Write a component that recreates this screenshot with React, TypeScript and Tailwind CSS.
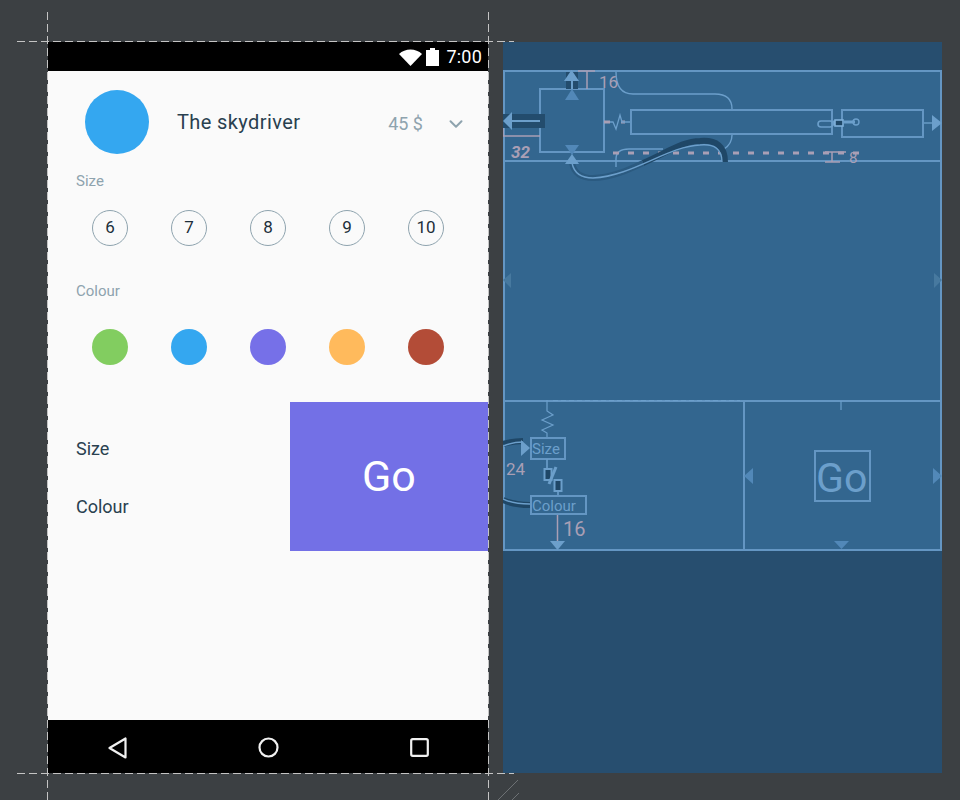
import { ChevronDown } from "lucide-react";

const sizes = ["6", "7", "8", "9", "10"];
const colours = ["bg-[#82cd60]", "bg-[#34a7f0]", "bg-[#7670e8]", "bg-[#ffba5c]", "bg-[#b34c37]"];

const font = "font-['Roboto','Liberation_Sans',sans-serif]";

const Phone = () => (
  <div className="flex flex-col w-[440px] h-[731px] bg-[#fafafa] shrink-0">
    {/* STATUS BAR */}
    <div className="h-[29px] bg-black flex items-center justify-end pr-[6px] gap-[4px] shrink-0">
      <svg width="23" height="18" viewBox="0 0 23 18" className="mt-[1px]">
        <path d="M0 6 C6 0 17 0 23 6 L11.5 18 Z" fill="#fff" />
      </svg>
      <svg width="13" height="18" viewBox="0 0 13 18" className="mt-[1px]">
        <path d="M4 0 H9 V2 H13 V18 H0 V2 H4 Z" fill="#fff" />
      </svg>
      <span className="text-white text-[18px] leading-none ml-[3px] tracking-[0.2px]">7:00</span>
    </div>

    {/* CONTENT */}
    <div className="flex-1 flex flex-col">
      <div className="flex items-center pl-[37px] pt-[19px] h-[83px]">
        <div className="w-[64px] h-[64px] rounded-full bg-[#34a7f0] shrink-0" />
        <span className="ml-[28px] text-[20px] leading-none text-[#29404f] tracking-[0.4px]">The skydriver</span>
        <span className="ml-auto text-[18px] leading-none text-[#8ea3ae] mt-[3px]">45 $</span>
        <ChevronDown className="ml-[22px] mr-[21px] mt-[3px] text-[#8ea3ae]" size={22} strokeWidth={2.2} />
      </div>

      <div className="pl-[28px] pt-[17px] text-[15px] leading-[20px] text-[#8ea3ae]">Size</div>
      <div className="flex justify-between pl-[44px] pr-[44px] pt-[19px]">
        {sizes.map((s) => (
          <div
            key={s}
            className="w-[36px] h-[36px] rounded-full border border-[#8ea3ae] flex items-center justify-center text-[17px] text-[#1d2f3a]"
          >
            {s}
          </div>
        ))}
      </div>

      <div className="pl-[28px] pt-[35px] text-[15px] leading-[20px] text-[#8ea3ae]">Colour</div>
      <div className="flex justify-between pl-[44px] pr-[44px] pt-[28px]">
        {colours.map((c) => (
          <div key={c} className={`w-[36px] h-[36px] rounded-full ${c}`} />
        ))}
      </div>

      <div className="flex mt-[37px] h-[149px]">
        <div className="flex-1 flex flex-col pl-[28px] pt-[36px] gap-[36px] text-[18px] leading-[22px] text-[#29404f]">
          <span>Size</span>
          <span>Colour</span>
        </div>
        <div className="w-[198px] bg-[#7370e6] flex items-center justify-center text-white text-[43px] leading-none">
          Go
        </div>
      </div>
    </div>

    {/* NAV BAR */}
    <div className="h-[53px] bg-black flex items-center justify-between pl-[60px] pr-[59px] pt-[2px] shrink-0">
      <svg width="19" height="22" viewBox="0 0 19 22">
        <path d="M1.5 11 L17.5 1.5 V20.5 Z" fill="none" stroke="#f1f1f1" strokeWidth="2.2" strokeLinejoin="round" />
      </svg>
      <svg width="21" height="21" viewBox="0 0 21 21">
        <circle cx="10.5" cy="10.5" r="9" fill="none" stroke="#f1f1f1" strokeWidth="2.2" />
      </svg>
      <svg width="19" height="19" viewBox="0 0 19 19">
        <rect x="1.2" y="1.2" width="16.6" height="16.6" rx="1.5" fill="none" stroke="#f1f1f1" strokeWidth="2.2" />
      </svg>
    </div>
  </div>
);

// constraint lines and springs of the blueprint, coordinates are local to the panel
const BlueprintLines = () => (
  <svg className="absolute inset-0" width="439" height="731" viewBox="0 0 439 731" fill="none">
    {/* curved guides */}
    <path d="M113 30 Q113 52 130 52 H212 Q229 52 229 67" stroke="#6c9fcb" strokeWidth="1.4" />
    <path d="M229 93 Q229 102 221 107" stroke="#6c9fcb" strokeWidth="1.4" />
    <path d="M113 125 V117 Q113 107 126 107 H160" stroke="#6c9fcb" strokeWidth="1.4" />
    {/* dashed baseline */}
    <path d="M110 111 H360" stroke="#a99fb5" strokeWidth="3" strokeDasharray="6 9" />
    {/* dragged connection */}
    <path d="M69 121 Q72 136 90 136 C108 136 125 128 140 121" stroke="#2b5a80" strokeWidth="6" />
    <path d="M140 121 C165 110 180 99 197 99 Q222 97 222 120" stroke="#1f4767" strokeWidth="6" />
    <path d="M69 121 Q72 136 90 136 C130 134 165 104 197 103 Q219 101 219 120" stroke="#6c9fcb" strokeWidth="1.4" />
    {/* top margin */}
    <path d="M75 29 H92 M84 29 V47" stroke="#a99fb5" strokeWidth="1.5" />
    <path d="M0 85 V94 H37" stroke="#a99fb5" strokeWidth="1.5" />
    <path d="M322 110 H343 M329 110 V120 M322 120 H337" stroke="#a99fb5" strokeWidth="1.5" />
    {/* top anchors */}
    <path d="M63 30 H75 V47 H63 Z" fill="#234c6d" />
    <path d="M69 37 V47" stroke="#6c9fcb" strokeWidth="2" />
    <path d="M61 39 L68.5 28 L76 39 Z" fill="#6c9fcb" />
    <path d="M62 58 L69 47 L76 58 Z" fill="#5288b8" />
    <path d="M62 103 H76 L69 113 Z" fill="#5288b8" />
    <path d="M62 122 L69 112 L76 122 Z" fill="#6c9fcb" />
    {/* left anchor */}
    <path d="M0 72 H42 V86 H0 Z" fill="#234c6d" />
    <path d="M6 79 H37" stroke="#6c9fcb" strokeWidth="2" />
    <path d="M9 70 L0 79 L9 88 Z" fill="#6c9fcb" />
    {/* spring between image and title */}
    <path d="M101 80 H107 M118 80 H122" stroke="#a99fb5" strokeWidth="3" />
    <path d="M107 80 H110 L113 87 L117 73 L119 80 H127" stroke="#6c9fcb" strokeWidth="1.3" />
    {/* chain between title and price */}
    <rect x="315" y="79" width="15" height="6" rx="3" stroke="#6c9fcb" strokeWidth="1.6" />
    <path d="M330 81 H338" stroke="#6c9fcb" strokeWidth="5" />
    <rect x="332" y="78" width="8" height="6" fill="#1f4767" stroke="#7fb0da" strokeWidth="1.6" />
    <path d="M340 80 H352" stroke="#6c9fcb" strokeWidth="3" />
    <circle cx="353" cy="80" r="3" stroke="#6c9fcb" strokeWidth="1.4" />
    {/* right anchor */}
    <path d="M421 81 H430" stroke="#6c9fcb" strokeWidth="1.4" />
    <path d="M429 73 L439 81 L429 89 Z" fill="#6c9fcb" />
    {/* mid section arrows */}
    <path d="M8 231 L0 238 L8 246 Z" fill="#47799f" />
    <path d="M431 231 L439 238 L431 246 Z" fill="#47799f" />
    {/* bottom section */}
    <path d="M50 358.5 H237" stroke="#6c9fcb" strokeWidth="1" strokeDasharray="5 3" />
    <path d="M44 358 V369 L50 373 L39 378 L50 383 L39 388 L44 391 V395" stroke="#6c9fcb" strokeWidth="1.2" />
    <path d="M0 402 Q10 399 20 399" stroke="#1f4767" strokeWidth="6" />
    <path d="M0 404 Q10 400 20 400" stroke="#6c9fcb" strokeWidth="1.4" />
    <path d="M18 398 L27 406 L18 414 Z" fill="#6c9fcb" />
    <path d="M0 458 Q10 463 27 463" stroke="#1f4767" strokeWidth="6" />
    <path d="M0 457 Q10 462 27 462" stroke="#6c9fcb" strokeWidth="1.4" />
    <path d="M44 417 V427 M55 449 V453" stroke="#6c9fcb" strokeWidth="1.6" />
    <rect x="41.5" y="427" width="7" height="11" stroke="#6c9fcb" strokeWidth="2" fill="#1f4767" />
    <rect x="51.5" y="438" width="7" height="11" stroke="#6c9fcb" strokeWidth="2" fill="#1f4767" />
    <path d="M46 442 L53 425" stroke="#6c9fcb" strokeWidth="3" />
    <path d="M54.5 473 V500" stroke="#a99fb5" strokeWidth="1.5" />
    <path d="M47 499 H62 L54.5 508 Z" fill="#6c9fcb" />
    <path d="M331 499 H346 L338.5 507 Z" fill="#5288b8" />
    <path d="M338 359 V368" stroke="#6c9fcb" strokeWidth="1.2" />
    <path d="M250 426 L241 434 L250 442 Z" fill="#5288b8" />
    <path d="M430 426 L439 434 L430 442 Z" fill="#5288b8" />
  </svg>
);

const Blueprint = () => (
  <div className="relative flex flex-col w-[439px] h-[731px] bg-[#274e6f] shrink-0 overflow-hidden">
    <div className="h-[28px] shrink-0" />

    <div className="h-[92px] shrink-0 bg-[#33668f] border-2 border-[#6496c3] flex items-start pl-[34px] pt-[16px]">
      <div className="w-[66px] h-[65px] border-2 border-[#6496c3] shrink-0" />
      <div className="w-[203px] h-[26px] ml-[25px] mt-[21px] border-2 border-[#6496c3] shrink-0" />
      <div className="w-[83px] h-[29px] ml-[8px] mt-[21px] border-2 border-[#6496c3] shrink-0" />
    </div>

    <div className="h-[238px] shrink-0 bg-[#33668f] border-x-2 border-[#6496c3]" />

    <div className="h-[151px] shrink-0 bg-[#33668f] border-2 border-[#6496c3] flex">
      <div className="w-[240px] border-r-2 border-[#6496c3] pl-[25px] pt-[35px] flex flex-col text-[15px] leading-[20px] text-[#6c9fcb] shrink-0">
        <div className="w-[36px] h-[23px] border-2 border-[#6496c3] pt-[1px] leading-[18px]">Size</div>
        <div className="w-[57px] h-[20px] mt-[35px] border-2 border-[#6496c3] pt-[1px] leading-[17px]">Colour</div>
      </div>
      <div className="flex-1 flex items-center justify-center">
        <div className="w-[57px] h-[52px] border-2 border-[#6496c3] flex items-center pt-[6px] text-[41px] leading-none text-[#6c9fcb]">
          Go
        </div>
      </div>
    </div>

    <BlueprintLines />

    {/* margin numbers */}
    <span className="absolute left-[96px] top-[32px] text-[17px] leading-none text-[#a99fb5]">16</span>
    <span className="absolute left-[8px] top-[102px] text-[17px] leading-none font-bold italic text-[#a99fb5]">32</span>
    <span className="absolute left-[346px] top-[109px] text-[15px] leading-none text-[#a99fb5]">8</span>
    <span className="absolute left-[3px] top-[419px] text-[17px] leading-none text-[#a99fb5]">24</span>
    <span className="absolute left-[60px] top-[477px] text-[20px] leading-none text-[#a99fb5]">16</span>
  </div>
);

export default function App() {
  return (
    <div className={`relative w-[960px] h-[800px] bg-[#3c4043] overflow-hidden flex items-start pt-[42px] pl-[48px] gap-[15px] ${font}`}>
      <Phone />
      <Blueprint />

      {/* layout guides */}
      <div className="absolute left-[47px] top-[12px] bottom-0 w-[1px] bg-[repeating-linear-gradient(180deg,#c4c4c4_0_8px,transparent_8px_12px)]" />
      <div className="absolute left-[488px] top-[12px] bottom-0 w-[1px] bg-[repeating-linear-gradient(180deg,#c4c4c4_0_8px,transparent_8px_12px)]" />
      <div className="absolute left-[17px] w-[497px] top-[41px] h-[1px] bg-[repeating-linear-gradient(90deg,#c4c4c4_0_8px,transparent_8px_12px)]" />
      <div className="absolute left-[17px] w-[497px] top-[773px] h-[1px] bg-[repeating-linear-gradient(90deg,#c4c4c4_0_8px,transparent_8px_12px)]" />

      {/* resize handle */}
      <svg className="absolute left-[498px] top-[780px]" width="22" height="20" viewBox="0 0 22 20" fill="none">
        <path d="M0 20 L20 0 M14 20 L21 13" stroke="#6d7174" strokeWidth="1" />
      </svg>
    </div>
  );
}
